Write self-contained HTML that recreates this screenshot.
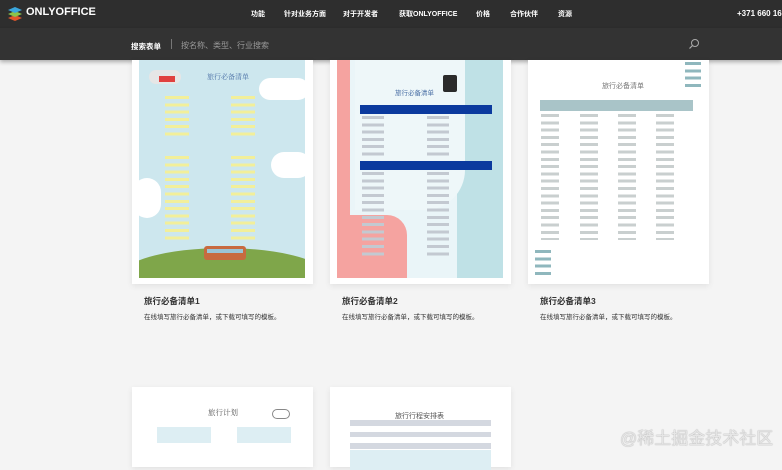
<!DOCTYPE html>
<html><head><meta charset="utf-8">
<style>
*{margin:0;padding:0;box-sizing:border-box}
body{width:782px;height:460px;overflow:hidden;background:#f4f4f4;font-family:"Liberation Sans","Noto Sans CJK SC",sans-serif;position:relative}
.top{position:absolute;left:0;top:0;width:782px;height:28px;background:#2e2e2e}
.sb{position:absolute;left:0;top:28px;width:782px;height:32px;background:#333;box-shadow:0 2px 4px rgba(0,0,0,.3)}
.nav{position:absolute;top:9px;font-size:7px;color:#fff;font-weight:bold}
.logo{position:absolute;left:26px;top:6px;color:#fff;font-size:11px;font-weight:bold}
.card{position:absolute;background:#fff;box-shadow:0 2px 6px rgba(0,0,0,.08)}
.img{position:absolute;left:7px;top:0;width:166px;height:218px;overflow:hidden}
.t{position:absolute;font-size:8.5px;font-weight:bold;color:#333}
.d{position:absolute;font-size:6.5px;color:#333}
.rows{position:absolute;background:repeating-linear-gradient(#0000 0 2px,var(--c) 2px 5px,#0000 5px 7.3px)}
</style></head><body>
<div class="top"></div>
<div class="sb"></div>
<svg style="position:absolute;left:7px;top:5px" width="16" height="16" viewBox="0 0 16 16">
<path d="M8 10l7 3-7 3-7-3z" fill="#e0562b"/><path d="M8 6l7 3-7 3-7-3z" fill="#8bc34a"/><path d="M8 2l7 3-7 3-7-3z" fill="#3aa6dc"/></svg>
<div class="logo">ONLYOFFICE</div>
<div class="nav" style="left:251px">功能</div>
<div class="nav" style="left:284px">针对业务方面</div>
<div class="nav" style="left:343px">对于开发者</div>
<div class="nav" style="left:399px">获取ONLYOFFICE</div>
<div class="nav" style="left:476px">价格</div>
<div class="nav" style="left:510px">合作伙伴</div>
<div class="nav" style="left:558px">资源</div>
<div class="nav" style="left:737px;font-size:8px">+371 660 16</div>
<div style="position:absolute;left:131px;top:41px;font-size:7.5px;color:#fff;font-weight:bold">搜索表单</div>
<div style="position:absolute;left:171px;top:39px;width:1px;height:10px;background:#777"></div>
<div style="position:absolute;left:181px;top:40px;font-size:8px;color:#999">按名称、类型、行业搜索</div>
<svg style="position:absolute;left:688px;top:38px" width="12" height="12" viewBox="0 0 12 12"><circle cx="7" cy="5" r="3.5" fill="none" stroke="#aaa" stroke-width="1"/><path d="M4.5 7.5L1.5 10.5" stroke="#aaa" stroke-width="1.2"/></svg>

<div class="card" style="left:132px;top:60px;width:181px;height:224px">
<div class="img" style="background:#cde7ee">
<div style="position:absolute;left:10px;top:10px;width:32px;height:14px;background:#e6e6e6;border-radius:8px"></div>
<div style="position:absolute;left:20px;top:16px;width:16px;height:6px;background:#e0403f"></div>
<div style="position:absolute;left:68px;top:12px;font-size:7px;color:#4a6fa5;font-family:'Noto Serif CJK SC',serif">旅行必备清单</div>
<div style="position:absolute;left:120px;top:18px;width:50px;height:22px;background:#fff;border-radius:12px"></div>
<div class="rows" style="--c:#f2ef9a;left:26px;top:34px;width:24px;height:45px"></div>
<div class="rows" style="--c:#f2ef9a;left:92px;top:34px;width:24px;height:45px"></div>
<div class="rows" style="--c:#f2ef9a;left:26px;top:94px;width:24px;height:88px"></div>
<div class="rows" style="--c:#f2ef9a;left:92px;top:94px;width:24px;height:88px"></div>
<div style="position:absolute;left:132px;top:92px;width:40px;height:26px;background:#fff;border-radius:14px"></div>
<div style="position:absolute;left:-6px;top:118px;width:28px;height:40px;background:#fff;border-radius:14px"></div>
<div style="position:absolute;left:-20px;top:188px;width:210px;height:60px;background:#7fa64a;border-radius:50%"></div>
<div style="position:absolute;left:65px;top:186px;width:42px;height:14px;background:#c86a3f;border-radius:3px"></div>
<div style="position:absolute;left:68px;top:189px;width:36px;height:4px;background:#9bc4d6"></div>
</div>
</div>
<div class="t" style="left:144px;top:295px">旅行必备清单1</div>
<div class="d" style="left:144px;top:311px">在线填写旅行必备清单，或下载可填写的模板。</div>

<div class="card" style="left:330px;top:60px;width:181px;height:224px">
<div class="img" style="background:#eaf5f8">
<div style="position:absolute;left:0;top:0;width:13px;height:218px;background:#f5a3a0"></div>
<div style="position:absolute;left:0;top:155px;width:70px;height:63px;background:#f5a3a0;border-radius:0 20px 0 0"></div>
<div style="position:absolute;left:120px;top:0;width:46px;height:218px;background:#bfe1e6"></div>
<div style="position:absolute;left:18px;top:0;width:110px;height:150px;background:#eef7f9;border-radius:0 0 40px 0"></div>
<div style="position:absolute;left:58px;top:27px;font-size:6.5px;color:#4a6fa5">旅行必备清单</div>
<div style="position:absolute;left:106px;top:15px;width:14px;height:17px;background:#2b2b2b;border-radius:2px"></div>
<div style="position:absolute;left:23px;top:45px;width:132px;height:9px;background:#0b3a9e"></div>
<div class="rows" style="--c:#c3c9d1;left:25px;top:54px;width:22px;height:44px"></div>
<div class="rows" style="--c:#c3c9d1;left:90px;top:54px;width:22px;height:44px"></div>
<div style="position:absolute;left:23px;top:101px;width:132px;height:9px;background:#0b3a9e"></div>
<div class="rows" style="--c:#c3c9d1;left:25px;top:110px;width:22px;height:88px"></div>
<div class="rows" style="--c:#c3c9d1;left:90px;top:110px;width:22px;height:88px"></div>
</div>
</div>
<div class="t" style="left:342px;top:295px">旅行必备清单2</div>
<div class="d" style="left:342px;top:311px">在线填写旅行必备清单，或下载可填写的模板。</div>

<div class="card" style="left:528px;top:60px;width:181px;height:224px">
<div class="img" style="left:0;width:181px;background:#fff">
<div class="rows" style="--c:#8fb7bd;left:157px;top:0;width:16px;height:30px"></div>
<div style="position:absolute;left:74px;top:21px;font-size:7px;color:#777">旅行必备清单</div>
<div style="position:absolute;left:12px;top:40px;width:153px;height:11px;background:#a9c4c8"></div>
<div class="rows" style="--c:#c9cfcf;left:13px;top:52px;width:18px;height:128px"></div>
<div class="rows" style="--c:#c9cfcf;left:52px;top:52px;width:18px;height:128px"></div>
<div class="rows" style="--c:#c9cfcf;left:90px;top:52px;width:18px;height:128px"></div>
<div class="rows" style="--c:#c9cfcf;left:128px;top:52px;width:18px;height:128px"></div>
<div class="rows" style="--c:#8fb7bd;left:7px;top:188px;width:16px;height:30px"></div>
</div>
</div>
<div class="t" style="left:540px;top:295px">旅行必备清单3</div>
<div class="d" style="left:540px;top:311px">在线填写旅行必备清单，或下载可填写的模板。</div>

<div class="card" style="left:132px;top:387px;width:181px;height:80px">
<div style="position:absolute;left:76px;top:20px;font-size:7.5px;color:#555;font-family:'Noto Serif CJK SC',serif">旅行计划</div>
<div style="position:absolute;left:25px;top:40px;width:54px;height:16px;background:#ddeef3"></div>
<div style="position:absolute;left:105px;top:40px;width:54px;height:16px;background:#ddeef3"></div>
<div style="position:absolute;left:140px;top:22px;width:18px;height:10px;border:1px solid #888;border-radius:5px"></div>
</div>
<div class="card" style="left:330px;top:387px;width:181px;height:80px">
<div style="position:absolute;left:65px;top:24px;font-size:7px;color:#555">旅行行程安排表</div>
<div style="position:absolute;left:20px;top:33px;width:141px;height:6px;background:#d4d8e0"></div>
<div style="position:absolute;left:20px;top:45px;width:141px;height:5px;background:#d4d8e0"></div>
<div style="position:absolute;left:20px;top:56px;width:141px;height:6px;background:#d4d8e0"></div>
<div style="position:absolute;left:20px;top:63px;width:141px;height:20px;background:#ddeef3"></div>
</div>
<div style="position:absolute;left:620px;top:424px;font-size:17px;color:#e6e6e6;text-shadow:0 0 1px #888">@稀土掘金技术社区</div>
</body></html>
